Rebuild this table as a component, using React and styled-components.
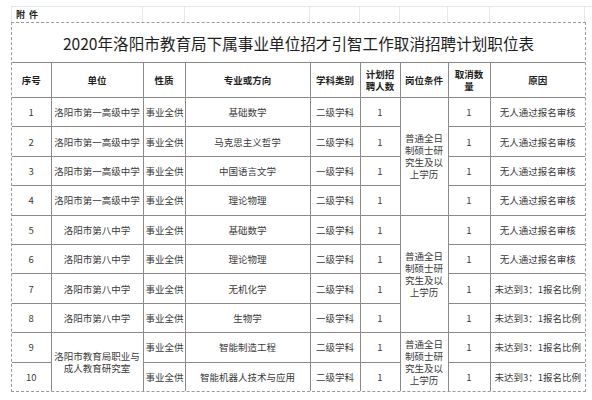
import React from "react";
import styled, { createGlobalStyle } from "styled-components";

const cols = [39, 92, 42, 125, 50, 40, 48, 42, 95];
const stripCols = [131, 42, 125, 50, 40, 48, 42, 96];

const CONDITION = "普通全日制硕士研究生及以上学历";

const rows = [
  { no: 1, unit: "洛阳市第一高级中学", major: "基础数学", kind: "二级学科", reason: "无人通过报名审核", cond: 4 },
  { no: 2, unit: "洛阳市第一高级中学", major: "马克思主义哲学", kind: "二级学科", reason: "无人通过报名审核" },
  { no: 3, unit: "洛阳市第一高级中学", major: "中国语言文学", kind: "一级学科", reason: "无人通过报名审核" },
  { no: 4, unit: "洛阳市第一高级中学", major: "理论物理", kind: "二级学科", reason: "无人通过报名审核" },
  { no: 5, unit: "洛阳市第八中学", major: "基础数学", kind: "二级学科", reason: "无人通过报名审核", cond: 4 },
  { no: 6, unit: "洛阳市第八中学", major: "理论物理", kind: "二级学科", reason: "无人通过报名审核" },
  { no: 7, unit: "洛阳市第八中学", major: "无机化学", kind: "二级学科", reason: "未达到3：1报名比例" },
  { no: 8, unit: "洛阳市第八中学", major: "生物学", kind: "一级学科", reason: "未达到3：1报名比例" },
  { no: 9, unit: "洛阳市教育局职业与成人教育研究室", unitSpan: 2, major: "智能制造工程", kind: "二级学科", reason: "未达到3：1报名比例", cond: 2 },
  { no: 10, unit: null, major: "智能机器人技术与应用", kind: "二级学科", reason: "未达到3：1报名比例" },
];

function App() {
  return (
    <>
      <GlobalStyle />
      <Page>
        <Strip>
          {stripCols.map((w, i) => (
            <StripCell key={i} style={{ width: w }}>
              {i === 0 ? "附 件" : ""}
            </StripCell>
          ))}
        </Strip>
        <Sheet>
          <Table>
            <colgroup>
              {cols.map((w, i) => (
                <col key={i} style={{ width: w }} />
              ))}
            </colgroup>
            <tbody>
              <tr>
                <Title colSpan={9}>2020年洛阳市教育局下属事业单位招才引智工作取消招聘计划职位表</Title>
              </tr>
              <HeadRow>
                <Th>序号</Th>
                <Th>单位</Th>
                <Th>性质</Th>
                <Th>专业或方向</Th>
                <Th>学科类别</Th>
                <Th $narrow>计划招聘人数</Th>
                <Th>岗位条件</Th>
                <Th $narrow>取消数量</Th>
                <Th>原因</Th>
              </HeadRow>
              {rows.map((r) => (
                <DataRow key={r.no}>
                  <Td>{r.no}</Td>
                  {r.unit && (
                    <Td rowSpan={r.unitSpan || 1} $wrap>
                      {r.unit}
                    </Td>
                  )}
                  <Td>事业全供</Td>
                  <Td>{r.major}</Td>
                  <Td>{r.kind}</Td>
                  <Td>1</Td>
                  {r.cond && (
                    <Td rowSpan={r.cond} $cond>
                      {CONDITION}
                    </Td>
                  )}
                  <Td>1</Td>
                  <Td>{r.reason}</Td>
                </DataRow>
              ))}
            </tbody>
          </Table>
        </Sheet>
      </Page>
    </>
  );
}

const GlobalStyle = createGlobalStyle`
  html, body {
    margin: 0;
    background: #ffffff;
  }
  body {
    font-family: "Noto Sans CJK SC", "Noto Sans", sans-serif;
  }
`;

const Page = styled.div`
  width: 592px;
  height: 400px;
  padding: 6px 0 0 11px;
  box-sizing: border-box;
  overflow: hidden;
`;

const Strip = styled.div`
  display: flex;
  height: 16px;
  border-top: 1px solid #e3e7ed;
  box-sizing: border-box;
`;

const StripCell = styled.div`
  box-sizing: border-box;
  border-left: 1px solid #e3e7ed;
  font-size: 9px;
  font-weight: 700;
  color: #222;
  line-height: 15px;
  padding-left: 4px;
  word-spacing: 2px;
  &:last-child {
    border-right: 1px solid #e3e7ed;
  }
`;

const Sheet = styled.div`
  width: 575px;
  border: 1px dashed #9a9a9a;
  box-sizing: border-box;
`;

const Table = styled.table`
  width: 573px;
  table-layout: fixed;
  border-collapse: collapse;
  border: 1px hidden;
  color: #3a3a3a;

  td,
  th {
    border: 1px solid #8a8a8a;
    padding: 0 2px;
    text-align: center;
    vertical-align: middle;
    font-size: 9.5px;
    line-height: 12px;
    white-space: nowrap;
    overflow: hidden;
  }
`;

const Title = styled.td`
  height: 39px;
  font-size: 15.6px !important;
  line-height: 20px !important;
  color: #1e1e1e;
  font-weight: 400;
`;

const HeadRow = styled.tr`
  height: 35px;
`;

const Th = styled.th`
  font-weight: 700;
  color: #1e1e1e;
  && {
    white-space: ${(p) => (p.$narrow ? "normal" : "nowrap")};
    padding: 0 ${(p) => (p.$narrow ? "4px" : "2px")};
  }
`;

const DataRow = styled.tr`
  height: 29.4px;
`;

const Td = styled.td`
  && {
    white-space: ${(p) => (p.$wrap || p.$cond ? "normal" : "nowrap")};
    padding: 0 ${(p) => (p.$cond ? "4px" : "2px")};
  }
`;

export default App;
